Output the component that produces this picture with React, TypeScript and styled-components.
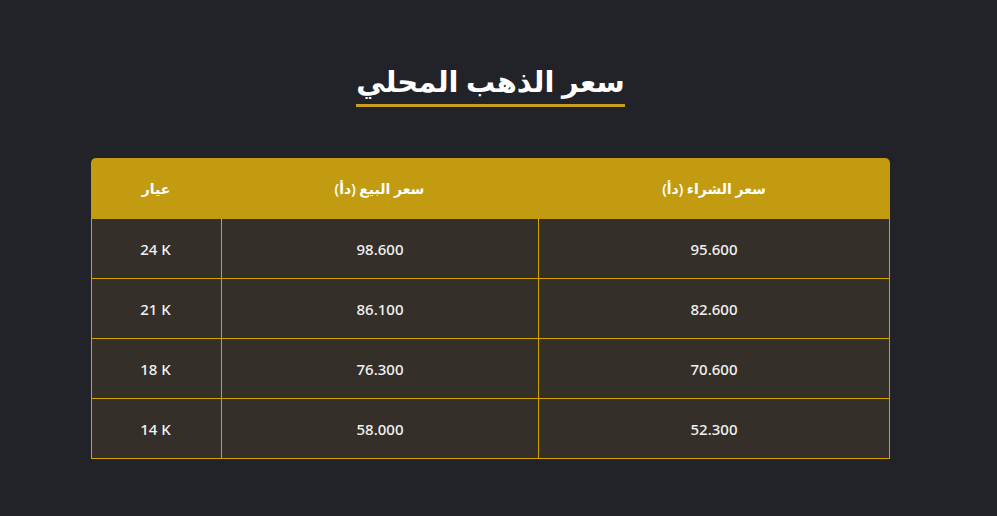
import React from 'react';
import styled, { createGlobalStyle } from 'styled-components';

const GlobalStyle = createGlobalStyle`
  html, body {
    margin: 0;
    padding: 0;
    background: #222329;
  }

  body {
    font-family: 'Noto Sans', 'DejaVu Sans', sans-serif;
    color: #ffffff;
  }
`;

const Page = styled.div`
  min-height: 516px;
  box-sizing: border-box;
  padding: 62px 107px 0 91px;
  display: flex;
  flex-direction: column;
  align-items: center;
`;

const Title = styled.h2`
  margin: 0;
  padding-bottom: 4px;
  font-size: 29px;
  font-weight: 700;
  line-height: 38px;
  color: #ffffff;
  border-bottom: solid 3px #c9a020;
`;

const Table = styled.table`
  margin-top: 51px;
  width: 799px;
  border-collapse: separate;
  border-spacing: 0;
  table-layout: fixed;
`;

const Head = styled.th`
  height: 61px;
  padding: 0;
  background-color: #c29b10;
  font-size: 14px;
  font-weight: 600;
  color: #ffffff;
  text-align: center;

  &:first-child {
    border-top-right-radius: 5px;
  }

  &:last-child {
    border-top-left-radius: 5px;
  }
`;

const Cell = styled.td`
  height: 59px;
  padding: 0;
  background-color: #343029;
  border-left: solid 1px #d4a300;
  border-bottom: solid 1px #d4a300;
  font-size: 15px;
  font-weight: 500;
  color: #f2f2f2;
  text-align: center;

  &:first-child {
    border-right: solid 1px #d4a300;
  }
`;

const rows = [
  { buy: '95.600', sell: '98.600', karat: '24 K' },
  { buy: '82.600', sell: '86.100', karat: '21 K' },
  { buy: '70.600', sell: '76.300', karat: '18 K' },
  { buy: '52.300', sell: '58.000', karat: '14 K' },
];

export default function App() {
  return (
    <>
      <GlobalStyle />
      <Page dir='rtl'>
        <Title>سعر الذهب المحلي</Title>
        <Table>
          <colgroup>
            <col style={{ width: 352 }} />
            <col style={{ width: 317 }} />
            <col style={{ width: 130 }} />
          </colgroup>
          <thead>
            <tr>
              <Head>سعر الشراء (دأ)</Head>
              <Head>سعر البيع (دأ)</Head>
              <Head>عيار</Head>
            </tr>
          </thead>
          <tbody>
            {rows.map((row) => (
              <tr key={row.karat}>
                <Cell>{row.buy}</Cell>
                <Cell>{row.sell}</Cell>
                <Cell dir='ltr'>{row.karat}</Cell>
              </tr>
            ))}
          </tbody>
        </Table>
      </Page>
    </>
  );
}
